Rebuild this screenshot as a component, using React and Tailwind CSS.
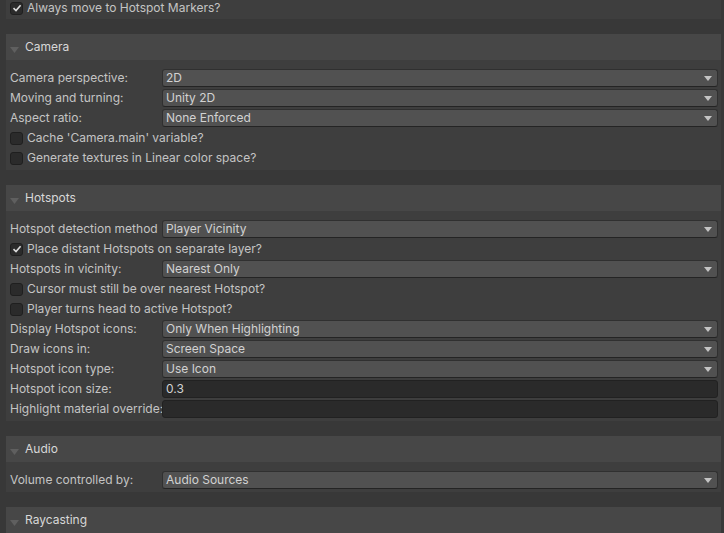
import React from 'react'

const font = { fontFamily: 'Inter, "Noto Sans", sans-serif' }

function Arrow() {
  return (
    <svg width="8" height="5" viewBox="0 0 8 5" className="shrink-0">
      <path d="M0 0 H8 L4 5 Z" fill="#c4c4c4" />
    </svg>
  )
}

function Fold() {
  return (
    <svg width="9" height="6" viewBox="0 0 9 6" className="mt-[5px] shrink-0">
      <path d="M0 0 H9 L4.5 6 Z" fill="#5f5f5f" />
    </svg>
  )
}

function Check({ on }) {
  return (
    <div className="w-[13px] h-[13px] shrink-0 rounded-[3px] bg-[#2b2b2b] border border-[#1f1f1f] flex items-center justify-center">
      {on && (
        <svg width="10" height="10" viewBox="0 0 10 10">
          <path d="M1.5 5.2 L4 7.6 L8.6 2.2" fill="none" stroke="#dcdcdc" strokeWidth="1.6" />
        </svg>
      )}
    </div>
  )
}

function Row({ item }) {
  if (item.type === 'check') {
    return (
      <div className="h-5 flex items-center gap-[4px]">
        <Check on={item.on} />
        <span className="text-[#c4c4c4]">{item.label}</span>
      </div>
    )
  }
  return (
    <div className="h-5 flex items-center">
      <span className="w-[152px] shrink-0 whitespace-nowrap text-[#c4c4c4]">{item.label}</span>
      {item.type === 'field' ? (
        <div className="flex-1 h-[18px] rounded-[3px] bg-[#2a2a2a] border border-[#212121] flex items-center px-[3px] text-[#d2d2d2]">
          {item.value}
        </div>
      ) : (
        <div className="flex-1 h-[18px] rounded-[3px] bg-[#515151] border border-[#303030] border-b-[#242424] flex items-center justify-between pl-[3px] pr-[5px] text-[#d2d2d2]">
          <span>{item.value}</span>
          <Arrow />
        </div>
      )}
    </div>
  )
}

function Section({ title, items }) {
  return (
    <div className="mt-[15px]">
      <div className="h-[26px] bg-[#474747] flex items-center gap-[6px] pl-[4px]">
        <Fold />
        <span className="text-[#d8d8d8]">{title}</span>
      </div>
      {items && (
        <div className="bg-[#3e3e3e] pt-[8px] pb-[2px] pl-[4px] pr-[3px]">
          {items.map((it, i) => (
            <Row key={i} item={it} />
          ))}
        </div>
      )}
    </div>
  )
}

const camera = [
  { type: 'drop', label: 'Camera perspective:', value: '2D' },
  { type: 'drop', label: 'Moving and turning:', value: 'Unity 2D' },
  { type: 'drop', label: 'Aspect ratio:', value: 'None Enforced' },
  { type: 'check', label: "Cache 'Camera.main' variable?" },
  { type: 'check', label: 'Generate textures in Linear color space?' },
]

const hotspots = [
  { type: 'drop', label: 'Hotspot detection method', value: 'Player Vicinity' },
  { type: 'check', label: 'Place distant Hotspots on separate layer?', on: true },
  { type: 'drop', label: 'Hotspots in vicinity:', value: 'Nearest Only' },
  { type: 'check', label: 'Cursor must still be over nearest Hotspot?' },
  { type: 'check', label: 'Player turns head to active Hotspot?' },
  { type: 'drop', label: 'Display Hotspot icons:', value: 'Only When Highlighting' },
  { type: 'drop', label: 'Draw icons in:', value: 'Screen Space' },
  { type: 'drop', label: 'Hotspot icon type:', value: 'Use Icon' },
  { type: 'field', label: 'Hotspot icon size:', value: '0.3' },
  { type: 'field', label: 'Highlight material override:', value: '' },
]

const audio = [{ type: 'drop', label: 'Volume controlled by:', value: 'Audio Sources' }]

export default function App() {
  return (
    <div className="w-[724px] h-[533px] overflow-hidden bg-[#383838] pl-[6px] pr-[3px] text-[12px]" style={font}>
      <div className="bg-[#3e3e3e] h-[19px] px-[4px] flex items-center">
        <div className="flex items-center gap-[4px] -mt-[3px]">
          <Check on />
          <span className="text-[#c4c4c4]">Always move to Hotspot Markers?</span>
        </div>
      </div>
      <Section title="Camera" items={camera} />
      <Section title="Hotspots" items={hotspots} />
      <Section title="Audio" items={audio} />
      <Section title="Raycasting" />
    </div>
  )
}
